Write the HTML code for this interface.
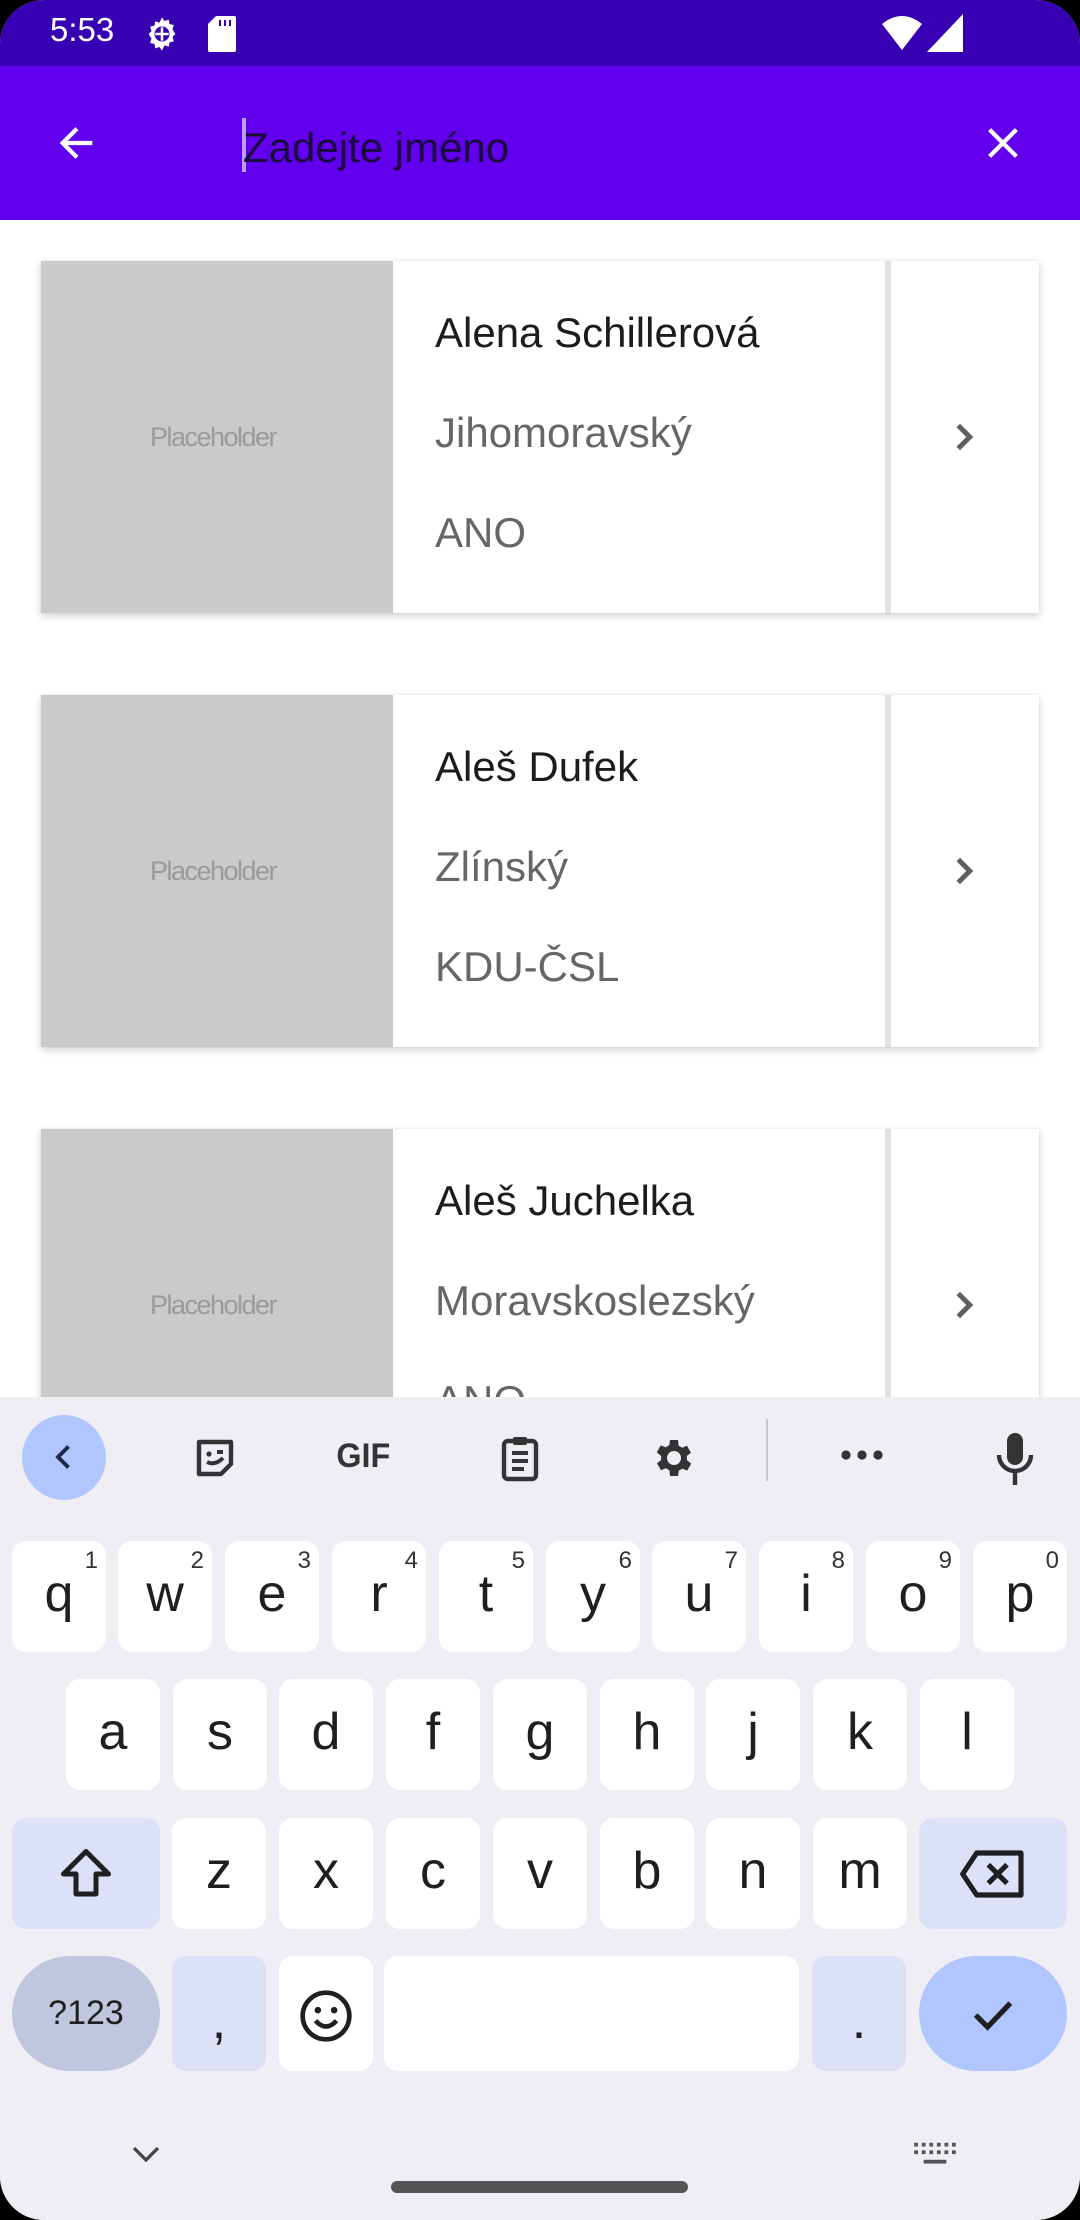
<!DOCTYPE html>
<html><head><meta charset="utf-8"><style>
*{margin:0;padding:0;box-sizing:border-box}
body{width:1080px;height:2220px;position:relative;overflow:hidden;background:#000;font-family:"Liberation Sans",sans-serif}
#screen{position:absolute;left:0;top:0;width:1080px;height:2220px;background:#fff;border-radius:44px;overflow:hidden}
.abs{position:absolute}
.status{left:0;top:0;width:1080px;height:66px;background:#3700B3}
.bar{left:0;top:66px;width:1080px;height:154px;background:#6200EE}
.card{position:absolute;left:41px;width:998px;height:352px;background:#fff;box-shadow:0 3px 8px rgba(0,0,0,.18),0 0 2px rgba(0,0,0,.08)}
.ph{position:absolute;left:0;top:0;width:352px;height:352px;background:#cacaca;color:#9a9a9a;font-size:27px;letter-spacing:-1.5px;text-align:center;line-height:352px;padding-right:8px}
.div{position:absolute;left:844px;top:0;width:6px;height:352px;background:#e2e2e2}
.t{position:absolute;left:394px;font-size:42px;white-space:nowrap}
.n{color:#1c1c1c;top:48px}
.r{color:#666;top:148px}
.p{color:#666;top:248px}
.chev{position:absolute;left:900px;top:153px}
.kb{left:0;top:1397px;width:1080px;height:823px;background:#f0eef5}
.key{position:absolute;width:94px;height:111px;background:#fff;border-radius:14px;font-size:52px;color:#1f1f1f;text-align:center;line-height:106px}
.key sup{position:absolute;right:8px;top:8px;font-size:24px;line-height:24px;color:#333}
</style></head><body>
<div id="screen">
<div class="abs status">
 <div class="abs" style="left:50px;top:11px;color:#fff;font-size:33px">5:53</div>
 <svg class="abs" style="left:142px;top:14px" width="40" height="40" viewBox="0 0 24 24"><path fill="#fff" d="M12 2l1.5 2.2 2.6-.8.4 2.6 2.6.6-.8 2.6L20 12l-1.7 1.8.8 2.6-2.6.6-.4 2.6-2.6-.8L12 22l-1.5-2.2-2.6.8-.4-2.6-2.6-.6.8-2.6L4 12l1.7-1.8-.8-2.6 2.6-.6.4-2.6 2.6.8z"/><circle cx="12" cy="12" r="4.5" fill="#3700B3"/><path d="M12 8v8M8 12h8" stroke="#fff" stroke-width="1.5"/></svg>
 <svg class="abs" style="left:208px;top:16px" width="28" height="36" viewBox="0 0 14 18"><path fill="#fff" d="M4 0h9a1 1 0 0 1 1 1v16a1 1 0 0 1-1 1H1a1 1 0 0 1-1-1V4z"/><path d="M6 2v3M8.5 2v3M11 2v3" stroke="#3700B3" stroke-width="1"/></svg>
 <svg class="abs" style="left:882px;top:16px" width="40" height="34" viewBox="0 0 20 17"><path fill="#fff" d="M0 4Q10-4 20 4L10 17z"/></svg>
 <svg class="abs" style="left:927px;top:14px" width="36" height="38" viewBox="0 0 18 19"><path fill="#fff" d="M18 0v19H0z"/></svg>
</div>
<div class="abs bar">
 <svg class="abs" style="left:54px;top:54px" width="46" height="46" viewBox="0 0 24 24"><path d="M20 12H5M12 4.5L4.5 12 12 19.5" stroke="#fff" stroke-width="2.2" fill="none"/></svg>
 <div class="abs" style="left:242px;top:52px;width:4px;height:54px;background:#b9a0ff"></div>
 <div class="abs" style="left:243px;top:58px;font-size:42px;color:#1a0b3e">Zadejte jméno</div>
 <svg class="abs" style="left:980px;top:54px" width="46" height="46" viewBox="0 0 24 24"><path d="M5 5l14 14M19 5L5 19" stroke="#fff" stroke-width="2.2"/></svg>
</div>

<div class="card" style="top:261px"><div class="ph">Placeholder</div><div class="div"></div>
<div class="t n">Alena Schillerová</div><div class="t r">Jihomoravský</div><div class="t p">ANO</div>
<svg class="chev" width="46" height="46" viewBox="0 0 24 24"><path d="M9 6l6 6-6 6" stroke="#5f5f5f" stroke-width="2.6" fill="none"/></svg></div>
<div class="card" style="top:695px"><div class="ph">Placeholder</div><div class="div"></div>
<div class="t n">Aleš Dufek</div><div class="t r">Zlínský</div><div class="t p">KDU-ČSL</div>
<svg class="chev" width="46" height="46" viewBox="0 0 24 24"><path d="M9 6l6 6-6 6" stroke="#5f5f5f" stroke-width="2.6" fill="none"/></svg></div>
<div class="card" style="top:1129px"><div class="ph">Placeholder</div><div class="div"></div>
<div class="t n">Aleš Juchelka</div><div class="t r">Moravskoslezský</div><div class="t p">ANO</div>
<svg class="chev" width="46" height="46" viewBox="0 0 24 24"><path d="M9 6l6 6-6 6" stroke="#5f5f5f" stroke-width="2.6" fill="none"/></svg></div>

<div class="abs kb">
 <div class="abs" style="left:22px;top:18px;width:84px;height:85px;border-radius:50%;background:#b1c5ff"></div>
 <svg class="abs" style="left:46px;top:42px" width="36" height="36" viewBox="0 0 24 24"><path d="M15 5l-7 7 7 7" stroke="#1f2a4a" stroke-width="2.6" fill="none"/></svg>
 <svg class="abs" style="left:191px;top:37px" width="48" height="48" viewBox="0 0 24 24"><path d="M4 4h16v11l-5 5H4z" stroke="#333" stroke-width="2.2" fill="none" stroke-linejoin="round"/><circle cx="9" cy="10" r="1.3" fill="#333"/><path d="M13 9h3M8 14q4 2 8-2" stroke="#333" stroke-width="2" fill="none"/></svg>
 <div class="abs" style="left:335px;top:40px;font-size:34px;font-weight:900;color:#333;letter-spacing:0px;transform:scaleX(0.95)">GIF</div>
 <svg class="abs" style="left:496px;top:36px" width="48" height="50" viewBox="0 0 24 25"><rect x="4" y="4" width="16" height="19" rx="2" stroke="#333" stroke-width="2.2" fill="none"/><rect x="8.5" y="2" width="7" height="4" rx="1" fill="#333"/><path d="M8 10h8M8 14h8M8 18h6" stroke="#333" stroke-width="2"/></svg>
 <svg class="abs" style="left:648px;top:37px" width="48" height="48" viewBox="0 0 24 24"><path fill="#333" d="M19.4 13a7.5 7.5 0 0 0 0-2l2.1-1.6-2-3.5-2.5 1a7 7 0 0 0-1.7-1L15 3h-4l-.4 2.7a7 7 0 0 0-1.7 1l-2.5-1-2 3.5L6.6 11a7.5 7.5 0 0 0 0 2l-2.1 1.6 2 3.5 2.5-1a7 7 0 0 0 1.7 1L11 21h4l.4-2.7a7 7 0 0 0 1.7-1l2.5 1 2-3.5zM13 15.5a3.5 3.5 0 1 1 0-7 3.5 3.5 0 0 1 0 7z"/></svg>
 <div class="abs" style="left:766px;top:22px;width:2px;height:62px;background:#c8c8cc"></div>
 <svg class="abs" style="left:838px;top:48px" width="48" height="20" viewBox="0 0 24 10"><circle cx="4" cy="5" r="2.3" fill="#333"/><circle cx="12" cy="5" r="2.3" fill="#333"/><circle cx="20" cy="5" r="2.3" fill="#333"/></svg>
 <svg class="abs" style="left:991px;top:32px" width="48" height="58" viewBox="0 0 24 29"><rect x="8" y="2" width="8" height="16" rx="4" fill="#333"/><path d="M4 13a8 8 0 0 0 16 0M12 21v7" stroke="#333" stroke-width="2.2" fill="none"/></svg>

 <div class="key" style="left:12px;top:144px">q<sup>1</sup></div>
 <div class="key" style="left:118px;top:144px">w<sup>2</sup></div>
 <div class="key" style="left:225px;top:144px">e<sup>3</sup></div>
 <div class="key" style="left:332px;top:144px">r<sup>4</sup></div>
 <div class="key" style="left:439px;top:144px">t<sup>5</sup></div>
 <div class="key" style="left:546px;top:144px">y<sup>6</sup></div>
 <div class="key" style="left:652px;top:144px">u<sup>7</sup></div>
 <div class="key" style="left:759px;top:144px">i<sup>8</sup></div>
 <div class="key" style="left:866px;top:144px">o<sup>9</sup></div>
 <div class="key" style="left:973px;top:144px">p<sup>0</sup></div>

 <div class="key" style="left:66px;top:282px">a</div>
 <div class="key" style="left:173px;top:282px">s</div>
 <div class="key" style="left:279px;top:282px">d</div>
 <div class="key" style="left:386px;top:282px">f</div>
 <div class="key" style="left:493px;top:282px">g</div>
 <div class="key" style="left:600px;top:282px">h</div>
 <div class="key" style="left:706px;top:282px">j</div>
 <div class="key" style="left:813px;top:282px">k</div>
 <div class="key" style="left:920px;top:282px">l</div>

 <div class="key" style="left:12px;top:421px;width:148px;background:#dce1f7"><svg style="margin-top:26px" width="60" height="60" viewBox="0 0 24 24"><path d="M12 3L3 12h5v8h8v-8h5z" stroke="#1f1f1f" stroke-width="2" fill="none" stroke-linejoin="round"/></svg></div>
 <div class="key" style="left:172px;top:421px">z</div>
 <div class="key" style="left:279px;top:421px">x</div>
 <div class="key" style="left:386px;top:421px">c</div>
 <div class="key" style="left:493px;top:421px">v</div>
 <div class="key" style="left:600px;top:421px">b</div>
 <div class="key" style="left:706px;top:421px">n</div>
 <div class="key" style="left:813px;top:421px">m</div>
 <div class="key" style="left:919px;top:421px;width:148px;background:#dce1f7"><svg style="margin-top:28px" width="72" height="56" viewBox="0 0 30 24"><path d="M8 3h19v18H8L2 12z" stroke="#1f1f1f" stroke-width="2.2" fill="none" stroke-linejoin="round"/><path d="M13 8l8 8M21 8l-8 8" stroke="#1f1f1f" stroke-width="2.2"/></svg></div>

 <div class="key" style="left:12px;top:559px;width:148px;height:115px;border-radius:58px;background:#c0c6de;font-size:34px;line-height:115px">?123</div>
 <div class="key" style="left:172px;top:559px;height:115px;background:#dce1f7;line-height:130px">,</div>
 <div class="key" style="left:279px;top:559px;height:115px"><svg style="margin-top:32px" width="56" height="56" viewBox="0 0 24 24"><circle cx="12" cy="12" r="10" stroke="#1f1f1f" stroke-width="2" fill="none"/><circle cx="8.5" cy="9.5" r="1.4" fill="#1f1f1f"/><circle cx="15.5" cy="9.5" r="1.4" fill="#1f1f1f"/><path d="M7.5 14q4.5 5 9 0" stroke="#1f1f1f" stroke-width="2" fill="none"/></svg></div>
 <div class="key" style="left:384px;top:559px;width:415px;height:115px"></div>
 <div class="key" style="left:812px;top:559px;height:115px;background:#dce1f7;line-height:130px">.</div>
 <div class="key" style="left:919px;top:559px;width:148px;height:115px;border-radius:58px;background:#b1c5ff"><svg style="margin-top:32px" width="56" height="52" viewBox="0 0 24 24"><path d="M4 12.5l5.5 5.5L20 7" stroke="#1f1f1f" stroke-width="2.4" fill="none"/></svg></div>

 <svg class="abs" style="left:128px;top:742px" width="36" height="30" viewBox="0 0 24 20"><path d="M4 6l8 8 8-8" stroke="#444" stroke-width="2.2" fill="none"/></svg>
 <svg class="abs" style="left:912px;top:742px" width="46" height="34" viewBox="0 0 24 18"><g fill="#555"><rect x="1" y="2" width="2" height="2"/><rect x="5" y="2" width="2" height="2"/><rect x="9" y="2" width="2" height="2"/><rect x="13" y="2" width="2" height="2"/><rect x="17" y="2" width="2" height="2"/><rect x="21" y="2" width="2" height="2"/><rect x="1" y="6" width="2" height="2"/><rect x="5" y="6" width="2" height="2"/><rect x="9" y="6" width="2" height="2"/><rect x="13" y="6" width="2" height="2"/><rect x="17" y="6" width="2" height="2"/><rect x="21" y="6" width="2" height="2"/><rect x="6" y="11" width="12" height="2"/></g></svg>
 <div class="abs" style="left:391px;top:784px;width:297px;height:12px;border-radius:6px;background:#555"></div>
</div>
</div>
</body></html>
